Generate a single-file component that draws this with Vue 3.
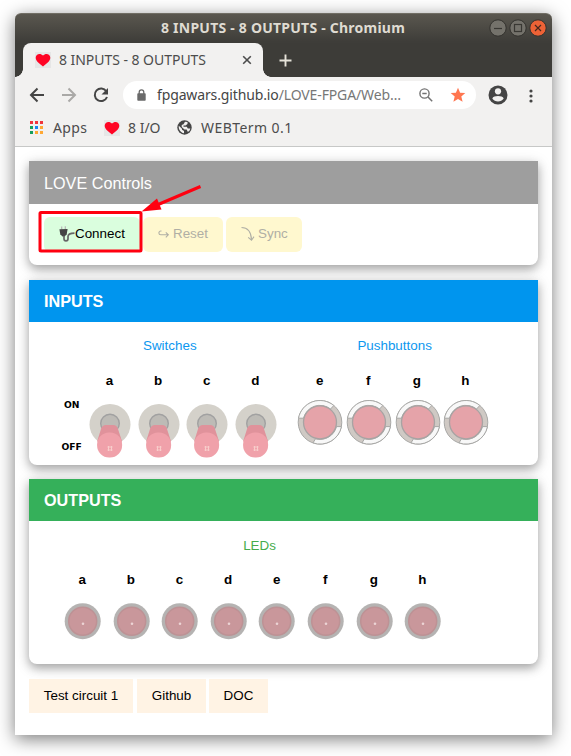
<script setup>
const switches = ['a', 'b', 'c', 'd']
const buttons = ['e', 'f', 'g', 'h']
const leds = ['a', 'b', 'c', 'd', 'e', 'f', 'g', 'h']
const appColors = ['#f0353c', '#f0353c', '#f0353c', '#159f5c', '#1a84f5', '#ffa834', '#159f5c', '#ffa834', '#ffa834']
</script>

<template>
  <div class="desktop">
    <div class="window">
      <header class="titlebar">
        <span class="title">8 INPUTS - 8 OUTPUTS - Chromium</span>
        <div class="controls">
          <svg class="ctl" viewBox="0 0 18 18"><circle cx="9" cy="9" r="8.2" fill="#74726b" stroke="#33322e" /><path d="M5 9.5h8" stroke="#393833" stroke-width="1.2" /></svg>
          <svg class="ctl" viewBox="0 0 18 18"><circle cx="9" cy="9" r="8.2" fill="#74726b" stroke="#33322e" /><rect x="5.5" y="5.5" width="7" height="7" fill="none" stroke="#393833" stroke-width="1.2" /></svg>
          <svg class="ctl" viewBox="0 0 18 18"><circle cx="9" cy="9" r="8.2" fill="#ed6236" stroke="#33322e" /><path d="M6 6l6 6M12 6l-6 6" stroke="#49281d" stroke-width="1.2" /></svg>
        </div>
      </header>
      <div class="tabs">
        <div class="tab">
          <svg class="heart" viewBox="0 0 16 16"><rect width="16" height="16" fill="#e6e6e6" /><path d="M8 14.500C5 12 .7 9.300.7 5.800.7 1.600 5.600.7 8 3.600 10.400.7 15.300 1.600 15.300 5.800 15.300 9.300 11 12 8 14.500Z" fill="#ff0424" /></svg>
          <span class="tabtext">8 INPUTS - 8 OUTPUTS</span>
          <svg class="close" viewBox="0 0 10 10"><path d="M1.200 1.200l7.600 7.600M8.800 1.200L1.200 8.800" stroke="#4c4c4c" stroke-width="1.600" /></svg>
        </div>
        <svg class="plus" viewBox="0 0 13 13"><path d="M6.500 .5v12M.5 6.500h12" stroke="#e6e3d9" stroke-width="1.900" /></svg>
      </div>
      <div class="toolbar">
        <svg class="navs" viewBox="0 0 108 38">
          <path d="M29 18H16.500M22.500 11.500L16 18l6.500 6.500" fill="none" stroke="#454545" stroke-width="2" />
          <path d="M47 18h12.500M53.500 11.500L60 18l-6.500 6.500" fill="none" stroke="#aaa9a7" stroke-width="2" />
          <path d="M91.300 14.200A6.300 6.300 0 1 0 92 20" fill="none" stroke="#454545" stroke-width="2" />
          <path d="M93 11v6.500h-6.500z" fill="#454545" />
        </svg>
        <div class="omnibox">
          <svg class="lock" viewBox="0 0 9 12"><path d="M2.200 5V3.200a2.300 2.300 0 0 1 4.600 0V5" fill="none" stroke="#6a6a6a" stroke-width="1.300" /><rect x=".3" y="4.300" width="8.400" height="7.500" rx=".8" fill="#6a6a6a" /></svg>
          <span class="url"><b>fpgawars.github.io</b>/LOVE-FPGA/Web…</span>
          <svg class="mag" viewBox="0 0 14 14"><circle cx="5.500" cy="5.500" r="4.600" fill="none" stroke="#737373" stroke-width="1.400" /><path d="M3.300 5.500h4.400M9 9l4.200 4.200" stroke="#737373" stroke-width="1.500" /></svg>
          <svg class="star" viewBox="0 0 16 16"><path d="M8 .8l2.100 4.900 5.200.4-4 3.500 1.300 5.200L8 12l-4.600 2.800 1.300-5.200-4-3.500 5.200-.4z" fill="#ff7650" /></svg>
        </div>
        <svg class="person" viewBox="0 0 20 20"><circle cx="10" cy="10" r="9.500" fill="#454545" /><circle cx="10" cy="6.300" r="3.100" fill="#f2f1f0" /><path d="M4.300 13.500c1.200-3.200 10.200-3.200 11.400 0-2.500 4-8.900 4-11.400 0z" fill="#f2f1f0" /></svg>
        <svg class="dots" viewBox="0 0 4 14"><circle cx="2" cy="2" r="1.600" /><circle cx="2" cy="7" r="1.600" /><circle cx="2" cy="12" r="1.600" /></svg>
      </div>
      <div class="bookmarks">
        <div class="appicon"><i v-for="(c, i) in appColors" :key="i" :style="{ background: c }" /></div>
        <span class="bm apps">Apps</span>
        <svg class="heart" viewBox="0 0 16 16"><rect width="16" height="16" fill="#e6e6e6" /><path d="M8 14.500C5 12 .7 9.300.7 5.800.7 1.600 5.600.7 8 3.600 10.400.7 15.300 1.600 15.300 5.800 15.300 9.300 11 12 8 14.500Z" fill="#ff0424" /></svg>
        <span class="bm io">8 I/O</span>
        <svg class="globe" viewBox="0 0 15 15"><circle cx="7.500" cy="7.500" r="7.200" fill="#454545" /><path d="M1.800 5.800l3.200 2.900v1l2 1.200v2.300C3.500 13 1.200 9 1.800 5.800zM8 1.700l2.500.4v2L8.500 5.500H6.500v1.300h3.300l1 1.800h2.500C12.800 11 11.500 12 10.700 11.800L9.700 9.600H7.500L4.700 7V5l1.800-.7z" fill="#f2f1f0" /></svg>
        <span class="bm term">WEBTerm 0.1</span>
      </div>
      <main class="page">
        <section class="card controlcard">
          <h2 class="head gray">LOVE Controls</h2>
          <div class="actions">
            <button class="action connect">
              <svg class="plug" viewBox="0 0 16 16"><path d="M2.700 3.500V.5M6.300 3.300V.3" stroke="#b6b6b6" stroke-width="1.200" /><path d="M.4 3.300l8.200-.4-.9 5.400-2.100 2.200H3.500L1.300 8.300z" fill="#444" /><path d="M5 9.800v2.900c0 2.900 4 2.900 4 0v-2.200c0-2.400 1.800-3.200 6.500-3.300" fill="none" stroke="#666" stroke-width="1.700" /></svg>Connect
              <svg class="callout" viewBox="0 0 166 72"><rect x="2" y="29.500" width="101" height="38.500" rx="1" fill="none" stroke="#ff0010" stroke-width="3" /><path d="M162.500 3.500L119 22" stroke="#ff0010" stroke-width="3" /><path d="M103.500 28.500L119 15.500l4.500 11z" fill="#ff0010" /></svg>
            </button>
            <button class="action reset"><svg class="hook" viewBox="0 0 12 8"><path d="M3.500 1H2.800a1.900 1.900 0 0 0 0 3.800H10M7.800 2.300l2.500 2.500-2.500 2.500" fill="none" stroke="#b0afa5" stroke-width="1.100" /></svg>Reset</button>
            <button class="action sync"><svg class="curve" viewBox="0 0 14 16"><path d="M.5 1.500C6.500 1.500 10 5 10.500 13.500M7.200 11.300l3.300 2.900 2.500-3.600" fill="none" stroke="#b0afa5" stroke-width="1.100" /></svg>Sync</button>
          </div>
        </section>
        <section class="card inputs">
          <h2 class="head blue"><b>INPUTS</b></h2>
          <div class="inputbody">
            <div class="onoff"><span>ON</span><span>OFF</span></div>
            <div class="group">
              <h3 class="sub">Switches</h3>
              <div class="row">
                <div v-for="s in switches" :key="s" class="cell">
                  <b>{{ s }}</b>
                  <svg class="part" viewBox="0 0 48 60">
                    <circle cx="25" cy="24.500" r="20.500" fill="#d4d1ca" />
                    <circle cx="25" cy="23.500" r="9.300" fill="#bdbbb6" stroke="#a1a1a1" stroke-width="1.400" />
                    <path d="M12.100 41.500L16 29q1.200-4 5-4h7q4 0 5 4l4.100 12.500z" fill="#e0929b" />
                    <rect x="12.100" y="32.500" width="25" height="25" rx="12" fill="#f0a1aa" />
                    <path d="M22.500 47h5M22.500 50h5M23.500 46v5M26.500 46v5" stroke="#f8cdcb" stroke-width="1" />
                  </svg>
                </div>
              </div>
            </div>
            <div class="group push">
              <h3 class="sub">Pushbuttons</h3>
              <div class="row">
                <div v-for="s in buttons" :key="s" class="cell">
                  <b>{{ s }}</b>
                  <svg class="part" viewBox="0 0 48 60">
                    <circle cx="25" cy="22.300" r="21.800" fill="#cfc9c4" stroke="#a8a8a6" />
                    <path d="M3.500 18.200A21.800 21.800 0 0 1 38.800 5.500L35.500 9A17 17 0 0 0 8.500 18.200zM46.500 26.600A21.800 21.800 0 0 1 18 42.900L20.500 38.800A17 17 0 0 0 41.500 26.600z" fill="#f8f8f8" stroke="#a8a8a6" />
                    <circle cx="25" cy="22.300" r="16.500" fill="#e5a3a9" stroke="#a8a3a3" stroke-width="1.300" />
                  </svg>
                </div>
              </div>
            </div>
          </div>
        </section>
        <section class="card outputs">
          <h2 class="head green"><b>OUTPUTS</b></h2>
          <div class="outbody">
            <h3 class="sub greenish">LEDs</h3>
            <div class="row">
              <div v-for="s in leds" :key="s" class="cell">
                <b>{{ s }}</b>
                <svg class="part" viewBox="0 0 48 60">
                  <circle cx="24.700" cy="22.200" r="18" fill="#b5b3b2" />
                  <circle cx="24.700" cy="22.200" r="14" fill="#c9979b" stroke="#bd9295" stroke-width="1.500" />
                  <circle cx="25" cy="24.700" r="1.300" fill="#ecd4d5" />
                </svg>
              </div>
            </div>
          </div>
        </section>
        <nav class="links"><a class="test">Test circuit 1</a><a class="github">Github</a><a class="doc">DOC</a></nav>
      </main>
    </div>
  </div>
</template>

<style>
body { margin: 0; background: #fff; }
</style>
<style scoped>
* { box-sizing: border-box; }
.desktop { width: 571px; height: 756px; padding: 13px 19px 21px 15px; overflow: hidden; }
.window { width: 537px; height: 722px; border-radius: 6px 6px 0 0; background: #fff; box-shadow: 0 4px 18px rgba(0,0,0,.52); font-family: "Noto Sans", sans-serif; color: #4c4c4c; }
svg { flex: none; display: block; }
.titlebar { height: 30px; border-radius: 6px 6px 0 0; background: linear-gradient(#5a574f, #3e3d39 95%); border-top: 1px solid #716e65; display: flex; align-items: center; padding-bottom: 2px; }
.title { margin-left: 146px; width: 251px; font-size: 14px; letter-spacing: .23px; font-weight: 700; color: #dfdbd2; white-space: nowrap; }
.controls { display: flex; gap: 2px; margin-left: 77px; }
.ctl { width: 18px; height: 18px; }
.tabs { height: 34px; background: #3d3c38; display: flex; align-items: center; padding-left: 8px; }
.tab { position: relative; width: 240px; height: 34px; background: #f2f1f0; border-radius: 8px 8px 0 0; display: flex; align-items: center; padding-left: 12px; }
.tab::before, .tab::after { content: ""; position: absolute; bottom: 0; width: 8px; height: 8px; }
.tab::before { left: -8px; background: radial-gradient(circle at 0 0, #3d3c38 7.500px, #f2f1f0 8px); }
.tab::after { right: -8px; background: radial-gradient(circle at 100% 0, #3d3c38 7.500px, #f2f1f0 8px); }
.heart { width: 16px; height: 16px; }
.tabtext { margin-left: 8px; width: 183px; font-size: 14px; letter-spacing: -.04px; white-space: nowrap; padding-bottom: 1px; }
.close { width: 10px; height: 10px; }
.plus { width: 13px; height: 13px; margin-left: 15.500px; }
.toolbar { height: 38px; background: #f2f1f0; display: flex; }
.navs { width: 108px; height: 38px; }
.omnibox { width: 353px; height: 28px; margin-top: 4px; border-radius: 14px; background: #fff; display: flex; align-items: center; padding-left: 13.500px; }
.lock { width: 9px; height: 12px; }
.url { margin-left: 11.500px; width: 262px; font-size: 14px; letter-spacing: -.13px; white-space: nowrap; color: #777; padding-bottom: 1px; }
.url b { color: #454545; font-weight: 400; }
.mag { width: 14px; height: 14px; }
.star { width: 16px; height: 16px; margin-left: 17px; }
.person { width: 20px; height: 20px; margin: 8px 0 0 12px; }
.dots { width: 4px; height: 14px; margin: 11.500px 0 0 20.500px; fill: #454545; }
.bookmarks { height: 32px; background: #f2f1f0; border-bottom: 1px solid #c7c8c7; display: flex; align-items: center; padding: 0 0 6px 15px; }
.appicon { display: grid; grid-template-columns: repeat(3, 3px); gap: 2px; }
.appicon i { width: 3px; height: 3px; }
.bm { font-size: 14px; white-space: nowrap; }
.apps { margin-left: 10px; width: 51px; letter-spacing: .4px; }
.io { margin-left: 8px; width: 49px; }
.globe { width: 15px; height: 15px; }
.term { margin-left: 9px; letter-spacing: .43px; }
.page { padding: 14px; font: 13.400px "Liberation Sans", sans-serif; color: #000; }
.card { width: 509px; margin-bottom: 14px; border-radius: 0 0 8px 8px; background: #fff; box-shadow: 0 4px 10px rgba(0,0,0,.28), 0 3px 16px rgba(0,0,0,.14); }
.controlcard { height: 104px; margin-bottom: 15px; }
.inputs, .outputs { height: 185px; }
.head { margin: 0; height: 42px; display: flex; align-items: center; padding-left: 15px; color: #fff; font-size: 16.200px; line-height: 18px; font-weight: 400; }
.gray { height: 43px; background: #9e9e9e; }
.blue { background: #0095ee; padding-bottom: 1px; }
.green { background: #35b05a; }
.actions { padding: 13px 0 0 15px; display: flex; gap: 3px; }
.action { height: 35px; border: 0; border-radius: 6px; background: #fff8cf; padding: 0; color: #b0afa5; font: inherit; display: flex; align-items: center; padding-bottom: 2px; }
.connect { position: relative; background: #dafede; width: 96px; padding-left: 15px; color: #000; }
.plug { width: 16px; height: 16px; }
.callout { position: absolute; left: -6px; top: -34px; width: 166px; height: 72px; z-index: 2; }
.reset { width: 80px; padding-left: 15px; }
.hook { width: 12px; height: 8px; margin-right: 3px; }
.sync { width: 76px; padding-left: 15px; }
.curve { width: 14px; height: 16px; margin-right: 3px; }
.inputbody { display: flex; padding-top: 16px; }
.onoff { width: 56.300px; height: 120px; padding: 61px 0 0 29px; display: flex; flex-direction: column; align-items: center; gap: 31px; font: 700 9.200px/11px "DejaVu Sans", sans-serif; }
.sub { margin: 0; height: 15px; line-height: 15px; text-align: center; font-size: 13.400px; font-weight: 400; color: #0c97ef; }
.group { width: 194.400px; }
.group .sub { width: 169px; }
.push { margin-left: 15.700px; }
.push .sub { width: 198.500px; }
.row { display: flex; }
.cell { width: 48.600px; padding-top: 20px; text-align: center; }
.cell b { display: block; height: 15px; line-height: 15px; }
.part { width: 48px; height: 60px; margin-top: 12px; }
.outbody { padding: 17px 0 0 29px; }
.outbody .sub { width: 403px; }
.outbody .cell { padding-top: 19px; }
.greenish { color: #45ab4c; }
.links { display: flex; gap: 3px; padding-top: 1px; }
.links a { height: 34px; background: #fff3e4; text-align: center; line-height: 33px; }
.test { width: 104px; margin-right: 1px; }
.github { width: 69px; }
.doc { width: 59px; }
</style>
